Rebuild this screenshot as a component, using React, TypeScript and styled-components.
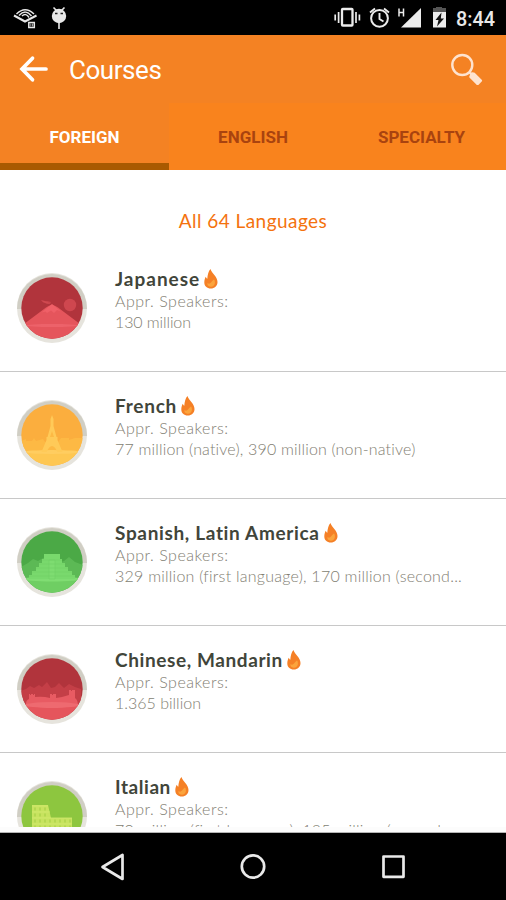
import React from 'react';
import styled, { createGlobalStyle } from 'styled-components';

const GlobalStyle = createGlobalStyle`
  * { box-sizing: border-box; }
  html, body { margin: 0; background: #fff; }
  body { overflow: hidden; }
  svg { display: block; flex: none; }
`;

const Screen = styled.div`
  width: 506px;
  height: 900px;
  display: flex;
  flex-direction: column;
  background: #fff;
  font-family: Roboto, sans-serif;
  overflow: hidden;
`;

const StatusBar = styled.header`
  flex: none;
  height: 35px;
  background: #000;
`;

const AppBar = styled.div`
  flex: none;
  height: 68px;
  display: flex;
  align-items: center;
  padding: 0 22px 0 19px;
  background: #f48223;
`;

const PageTitle = styled.h1`
  flex: 1;
  margin: 2px 0 0 20px;
  font-size: 26px;
  line-height: 32px;
  font-weight: 400;
  letter-spacing: -0.45px;
  color: #fff;
`;

const Tabs = styled.nav`
  flex: none;
  height: 67px;
  display: grid;
  grid-template-columns: 169px 168px 169px;
`;

const Tab = styled.div<{ $active?: boolean }>`
  display: flex;
  align-items: center;
  justify-content: center;
  padding-top: ${(p) => (p.$active ? 7 : 1)}px;
  border-bottom: ${(p) => (p.$active ? '7px solid #a95a00' : 'none')};
  background: ${(p) => (p.$active ? '#f48223' : '#f9831d')};
  color: ${(p) => (p.$active ? '#fff' : '#a9430f')};
  font-size: 17px;
  font-weight: 700;
`;

const Content = styled.main`
  flex: none;
  height: 657px;
  overflow: hidden;
  font-family: Lato, sans-serif;
`;

const ListHeading = styled.h2`
  height: 75px;
  margin: 0;
  padding-top: 39px;
  text-align: center;
  font-size: 19px;
  line-height: 24px;
  font-weight: 400;
  letter-spacing: 0.45px;
  color: #f4720e;
`;

const Row = styled.article`
  height: 127px;
  display: flex;
  border-bottom: 1px solid #c8c8c8;
  padding: 28px 40px 0 17px;
`;

const Details = styled.div`
  margin: -8px 0 0 28px;
  white-space: nowrap;
`;

const NameLine = styled.div`
  height: 27px;
  display: flex;
  align-items: center;
  gap: 4px;
`;

const Name = styled.h3<{ $spacing: number }>`
  margin: 0;
  font-size: 19px;
  line-height: 26px;
  font-weight: 700;
  letter-spacing: ${(p) => p.$spacing}px;
  color: #41453a;
`;

const Captions = styled.div`
  margin-top: -1px;
`;

const Caption = styled.p<{ $spacing: number }>`
  margin: 0;
  font-size: 16px;
  line-height: 20.7px;
  font-weight: 300;
  letter-spacing: ${(p) => p.$spacing}px;
  color: #827e72;
`;

const ListFooter = styled.div`
  flex: none;
  height: 6px;
  background: #fcfcfc;
  border-bottom: 1px solid #b4b4b4;
`;

const SystemNav = styled.footer`
  flex: none;
  height: 67px;
  background: #000;
`;

type Scene = 'fuji' | 'eiffel' | 'pyramid' | 'wall' | 'colosseum';

const skies: Record<Scene, string> = {
  fuji: '#b1343c',
  eiffel: '#fbae3e',
  pyramid: '#4ba946',
  wall: '#b1343c',
  colosseum: '#8dc63f',
};

const scenes: Record<Scene, React.ReactNode> = {
  fuji: (
    <>
      <circle cx="53" cy="32" r="6.2" fill="#cf474f" />
      <path d="M24 27l6 1.500 4 2.500-4-.3-4-1.400zM29 28l5 1-1 1z" fill="#d04950" />
      <path d="M4 52h62v18H4z" fill="#e5555c" />
      <path d="M7 51L29 34.500q6-5 12 0L63 51v3H7z" fill="#e5555c" />
      <path d="M35 31l9 7.500-4-1.500-3 3-3-2.500-4 2.500-1.500-1.500-4 1z" fill="#ef6068" />
      <ellipse cx="35" cy="52.500" rx="26" ry="1.500" fill="#ed626a" />
    </>
  ),
  eiffel: (
    <>
      <path d="M4 41l5-2v2h6l2-3 2 3 7-2 2 3h13l3-4h8v2l6-2h10v16H4z" fill="#fdb944" />
      <path d="M3 51h64v19H3z" fill="#fec752" />
      <ellipse cx="35" cy="52" rx="28" ry="2" fill="#ffcd60" />
      <path d="M35 15l1.500 4v7l3 11h1v3l5 12h-5q-5.500-12-11 0h-5l5-12v-3h1l3-11v-7z" fill="#ffca58" />
      <path d="M35 31l2 6h-4z" fill="#fdb944" />
    </>
  ),
  pyramid: (
    <>
      <path d="M4 40l7-4 5-4 5 2 7-4 10 7 9-3 5-4 6 5 8 3v17H4z" fill="#5cb955" />
      <path d="M3 52h64v18H3z" fill="#6fce63" />
      <ellipse cx="35" cy="52" rx="29" ry="2.500" fill="#80dd73" />
      <path d="M27 27h16v5h2v4h3v4h3v4h4v4h3v4H12v-4h3v-4h4v-4h3v-4h3v-4h2z" fill="#79d96d" />
      <path d="M32 33h6v19h-6zM25 33h20M22 37h26M19 41h32M15 45h40M12 49h46" fill="#7edc71" stroke="#6fd065" strokeWidth=".6" />
    </>
  ),
  wall: (
    <>
      <path d="M3 37l6-2 4-3 4 2 5-3 3 2 5-5 4 6 4-1 4-4 5 5 5-4 6 3 6 2v16H3z" fill="#c43f47" />
      <path d="M9 50q0-4 3-5v-5h1v1h1v-1h2v1h1v-1h1v3q8-1 15 1v-4h2v1h1v-1h3v4l6-1 7-2v-5h2v1h1v-1h3v8q3 2 3 8H9z" fill="#e85b63" />
      <path d="M3 51h64v19H3z" fill="#e5555c" />
      <ellipse cx="35" cy="51" rx="27" ry="3" fill="#ee6a70" />
    </>
  ),
  colosseum: (
    <>
      <path d="M15 24h16l3 13h21v33H15z" fill="#c7e35f" />
      <path d="M17 28h14M17 34h15M17 40h38M17 46h38" stroke="#b4d850" strokeWidth="3" strokeDasharray="2 3" fill="none" />
      <path d="M15 25h16M15 31h18M15 37h40M15 43h40" stroke="#d3ea70" strokeWidth=".8" fill="none" />
    </>
  ),
};

const Badge = ({ scene }: { scene: Scene }) => (
  <svg width="70" height="70" viewBox="0 0 70 70">
    <defs>
      <clipPath id={`disc-${scene}`}>
        <circle cx="35" cy="35" r="30.700" />
      </clipPath>
    </defs>
    <circle cx="35" cy="35" r="35" fill="#e6e4dd" />
    <path d="M0 36a35 35 0 0 1 70 0z" fill="#d0cec4" />
    <g clipPath={`url(#disc-${scene})`}>
      <path d="M0 0h70v70H0z" fill={skies[scene]} />
      {scenes[scene]}
    </g>
  </svg>
);

const Flame = () => (
  <svg width="14" height="20" viewBox="0 0 14 20">
    <path d="M6.500 0C7.500 4 13.500 7.500 13.500 13c0 4-3 6.500-6.700 6.500C3 19.500.3 17 .3 13.500.3 11 1 9 1.800 7.700c.5 1 .8 1.700 1.500 2C3.500 6 4.500 2 6.500 0z" fill="#f58026" />
    <path d="M10 10.500c1.600 1.800 1.500 7-3 7.200-3 .1-4-2-3.500-3.700 1 .8 1.800.8 2.600.3C7.500 13.500 8 11.500 10 10.500z" fill="#fba43c" />
  </svg>
);

const StatusIcons = () => (
  <svg width="506" height="35" viewBox="0 0 506 35" fill="none">
    <g stroke="#e8e8e8" strokeWidth="1.500">
      <path d="M14 15.500l11 6 11.500-6" strokeWidth="2" />
      <path d="M16.500 14q8.500-8.500 17.500 0M19 15.500q6.500-7 12.500.5M22 16q4-3.500 7 1.500" />
      <rect x="28.800" y="22.500" width="5.500" height="5" fill="#000" />
      <path d="M30.800 23.500v3M32.500 23.500v3" strokeWidth=".7" />
    </g>
    <path d="M53.500 7.500l3 3M64.500 7.500l-3 3M59 23v6" stroke="#e8e8e8" strokeWidth="1.600" />
    <circle cx="59" cy="16" r="7.200" fill="#e8e8e8" />
    <path d="M55 13.500h2.500M60.500 13.500H63" stroke="#222" strokeWidth="1.500" />
    <rect x="342" y="9" width="10.500" height="16.500" rx=".8" stroke="#ececec" strokeWidth="2.300" />
    <path d="M338.600 12v11M335.200 14.500v6M356 12v11M359.400 14.500v6" stroke="#ececec" strokeWidth="1.700" />
    <circle cx="379.500" cy="18.300" r="8.400" stroke="#ececec" strokeWidth="2" />
    <path d="M379.500 13v6l4 2.500M370 12.500l5-4M389 12.500l-5-4" stroke="#ececec" strokeWidth="1.900" />
    <path d="M399 8.500v8M403.500 8.500v8M399 12.500h4.500" stroke="#ececec" strokeWidth="1.500" />
    <path d="M421 8v19.500h-20z" fill="#ececec" />
    <path d="M433 8h3V7h6v1h4v4h-13z" fill="#555" />
    <path d="M433 12h13v15.500h-13z" fill="#ececec" />
    <path d="M441.500 12.500l-6 7.500h3l-1.500 6.500 7-8h-3.200z" fill="#111" />
    <text x="456" y="25.500" fill="#e8e8e8" fontFamily="Roboto" fontSize="19.500" fontWeight="500" textLength="39" lengthAdjust="spacingAndGlyphs">8:44</text>
  </svg>
);

const BackIcon = () => (
  <svg width="30" height="28" viewBox="0 0 30 28" fill="none" stroke="#fff" strokeWidth="3.700" strokeLinecap="round" strokeLinejoin="round">
    <path d="M13.500 3.200L3 14l10.500 10.800M3.500 14H27" strokeLinejoin="miter" />
  </svg>
);

const SearchIcon = () => (
  <svg width="34" height="32" viewBox="0 0 34 32" fill="none" stroke="#fee3cf">
    <circle cx="12.300" cy="12" r="10" strokeWidth="2.400" />
    <path d="M19 19l4 4" strokeWidth="2.200" />
    <path d="M22 20.500l1.800.2 7 7-3.300 3.300-7-7.200z" fill="#fee3cf" strokeWidth="2.500" strokeLinejoin="round" />
  </svg>
);

const NavIcons = () => (
  <svg width="506" height="67" viewBox="0 0 506 67" fill="none" stroke="#e9e9e9" strokeWidth="2.700" strokeLinejoin="round">
    <path d="M122.500 22v24L102.500 34z" />
    <circle cx="253" cy="33.500" r="11.200" />
    <rect x="383.500" y="23.500" width="20" height="20.300" />
  </svg>
);

interface Course {
  name: string;
  speakers: string;
  scene: Scene;
  nameSpacing: number;
  speakersSpacing: number;
}

const courses: Course[] = [
  { name: 'Japanese', speakers: '130 million', scene: 'fuji', nameSpacing: 1, speakersSpacing: -0.1 },
  { name: 'French', speakers: '77 million (native), 390 million (non-native)', scene: 'eiffel', nameSpacing: 0.75, speakersSpacing: 0.18 },
  { name: 'Spanish, Latin America', speakers: '329 million (first language), 170 million (second...', scene: 'pyramid', nameSpacing: 0.65, speakersSpacing: 0.24 },
  { name: 'Chinese, Mandarin', speakers: '1.365 billion', scene: 'wall', nameSpacing: 0.6, speakersSpacing: 0 },
  { name: 'Italian', speakers: '70 million (first language), 125 million (second...', scene: 'colosseum', nameSpacing: 0.55, speakersSpacing: 0.25 },
];

export default function App() {
  return (
    <Screen>
      <GlobalStyle />
      <StatusBar>
        <StatusIcons />
      </StatusBar>
      <AppBar>
        <BackIcon />
        <PageTitle>Courses</PageTitle>
        <SearchIcon />
      </AppBar>
      <Tabs>
        <Tab $active>FOREIGN</Tab>
        <Tab>ENGLISH</Tab>
        <Tab>SPECIALTY</Tab>
      </Tabs>
      <Content>
        <ListHeading>All 64 Languages</ListHeading>
        {courses.map((c) => (
          <Row key={c.name}>
            <Badge scene={c.scene} />
            <Details>
              <NameLine>
                <Name $spacing={c.nameSpacing}>{c.name}</Name>
                <Flame />
              </NameLine>
              <Captions>
                <Caption $spacing={0.5}>Appr. Speakers:</Caption>
                <Caption $spacing={c.speakersSpacing}>{c.speakers}</Caption>
              </Captions>
            </Details>
          </Row>
        ))}
      </Content>
      <ListFooter />
      <SystemNav>
        <NavIcons />
      </SystemNav>
    </Screen>
  );
}
